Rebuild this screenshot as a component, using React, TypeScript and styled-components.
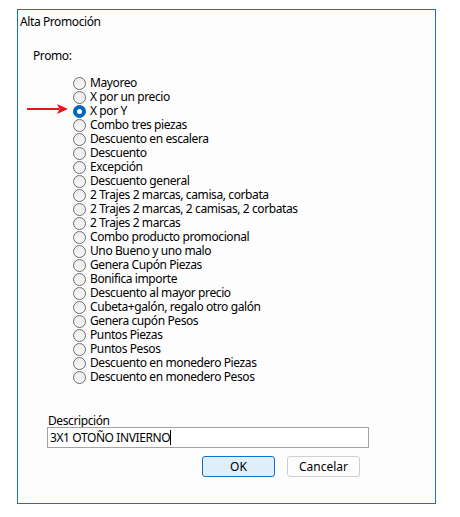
import React from "react";
import styled, { createGlobalStyle } from "styled-components";

const Global = createGlobalStyle`
  html, body { margin: 0; padding: 0; background: #ffffff; }
  body { font-family: "Noto Sans", "Open Sans", sans-serif; font-size: 12px; letter-spacing: -0.4px; color: #000; }
`;

const Frame = styled.div`
  box-sizing: border-box;
  margin: 9px 0 0 17px;
  width: 419px;
  height: 495px;
  border: 1px solid #1a72c4;
  background: #fdfdfd;
  display: flex;
  flex-direction: column;
`;

const Title = styled.div`
  padding: 4px 0 0 2px;
  height: 16px;
  line-height: 16px;
`;

const Group = styled.div`
  padding: 18px 0 0 15px;
  line-height: 16px;
`;

const List = styled.div`
  margin: 12px 0 0 55px;
  display: flex;
  flex-direction: column;
`;

const Row = styled.label`
  position: relative;
  display: flex;
  align-items: center;
  height: 14px;
  line-height: 14px;
  white-space: nowrap;
`;

const Radio = styled.span<{ $checked?: boolean }>`
  box-sizing: border-box;
  width: 13px;
  height: 13px;
  border-radius: 50%;
  margin-right: 4px;
  flex: none;
  display: flex;
  align-items: center;
  justify-content: center;
  border: 1px solid ${(p) => (p.$checked ? "#0067c0" : "#6d6d6d")};
  background: ${(p) => (p.$checked ? "#0067c0" : "linear-gradient(#ececec, #f8f8f8)")};
  &::after {
    content: "";
    display: ${(p) => (p.$checked ? "block" : "none")};
    width: 5px;
    height: 5px;
    border-radius: 50%;
    background: #fff;
  }
`;

const Arrow = styled.svg`
  position: absolute;
  left: -46px;
  top: -2px;
`;

const Bottom = styled.div`
  margin: 30px 0 0 29px;
  display: flex;
  flex-direction: column;
`;

const Label = styled.div`
  line-height: 13px;
  padding-left: 1px;
`;

const Input = styled.div`
  box-sizing: border-box;
  width: 322px;
  height: 21px;
  border: 1px solid #a3a3a3;
  background: #fff;
  padding-left: 2px;
  line-height: 19px;
  display: flex;
  align-items: center;
`;

const Caret = styled.span`
  display: inline-block;
  width: 1px;
  height: 15px;
  background: #000;
`;

const Buttons = styled.div`
  display: flex;
  gap: 12px;
  margin: 8px 0 0 155px;
`;

const Button = styled.button<{ $primary?: boolean }>`
  box-sizing: border-box;
  width: 73px;
  height: 21px;
  border-radius: 3px;
  font: inherit;
  padding: 0;
  color: #000;
  border: 1px solid ${(p) => (p.$primary ? "#0a74d0" : "#cfcfcf")};
  background: ${(p) => (p.$primary ? "#e0eef9" : "#fdfdfd")};
`;

const options = [
  "Mayoreo",
  "X por un precio",
  "X por Y",
  "Combo tres piezas",
  "Descuento en escalera",
  "Descuento",
  "Excepción",
  "Descuento general",
  "2 Trajes 2 marcas, camisa, corbata",
  "2 Trajes 2 marcas, 2 camisas, 2 corbatas",
  "2 Trajes 2 marcas",
  "Combo producto promocional",
  "Uno Bueno y uno malo",
  "Genera Cupón Piezas",
  "Bonifica importe",
  "Descuento al mayor precio",
  "Cubeta+galón, regalo otro galón",
  "Genera cupón Pesos",
  "Puntos Piezas",
  "Puntos Pesos",
  "Descuento en monedero Piezas",
  "Descuento en monedero Pesos",
];

export default function App() {
  return (
    <>
      <Global />
      <Frame>
        <Title>Alta Promoción</Title>
        <Group>Promo:</Group>
        <List>
          {options.map((o, i) => (
            <Row key={o}>
              {i === 2 && (
                <Arrow width="42" height="14" viewBox="0 0 42 14">
                  <path d="M0 7 H32" stroke="#e8141b" strokeWidth="2" />
                  <path d="M30 2 L41 7 L30 12 L32.5 7 Z" fill="#e8141b" />
                </Arrow>
              )}
              <Radio $checked={i === 2} />
              {o}
            </Row>
          ))}
        </List>
        <Bottom>
          <Label>Descripción</Label>
          <Input>
            3X1 OTOÑO INVIERNO
            <Caret />
          </Input>
          <Buttons>
            <Button $primary>OK</Button>
            <Button>Cancelar</Button>
          </Buttons>
        </Bottom>
      </Frame>
    </>
  );
}
